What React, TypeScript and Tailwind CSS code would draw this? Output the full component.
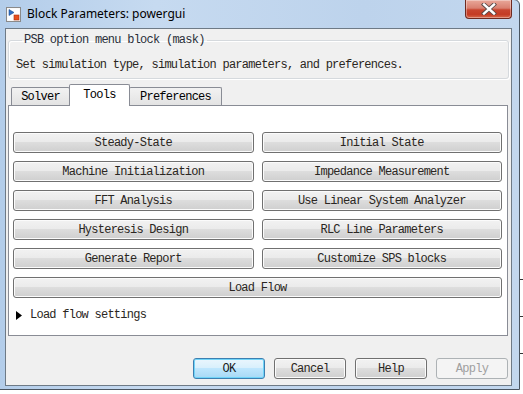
import React from "react";

const mono = "font-['Liberation_Mono','DejaVu_Sans_Mono',monospace] text-[12px] tracking-[-0.75px]";

function Btn({ label, wide }: { label: string; wide?: boolean }) {
  return (
    <div
      className={`h-[21px] rounded-[3px] border border-[#707070] bg-[linear-gradient(#f2f2f2_0%,#ebebeb_45%,#dddddd_50%,#cfcfcf_100%)] shadow-[inset_0_0_0_1px_#fbfbfb] flex items-center justify-center text-[#2a2622] ${mono} ${wide ? "col-span-2" : ""}`}
    >
      {label}
    </div>
  );
}

function BottomBtn({ label, kind }: { label: string; kind?: "ok" | "disabled" }) {
  let cls =
    "border-[#707070] bg-[linear-gradient(#f2f2f2_0%,#ebebeb_45%,#dddddd_50%,#cfcfcf_100%)] text-[#2a2622] shadow-[inset_0_0_0_1px_#fbfbfb]";
  if (kind === "ok")
    cls =
      "border-[#3c7fb1] bg-[linear-gradient(#eaf6fd_0%,#d9f0fc_45%,#bee6fd_50%,#a7d9f5_100%)] text-[#1a1a1a] shadow-[inset_0_0_0_1px_#70d4f8]";
  if (kind === "disabled")
    cls = "border-[#adb2b5] bg-[#f4f4f4] text-[#a0a0a0]";
  return (
    <div className={`w-[72px] h-[21px] rounded-[3px] border flex items-center justify-center ${mono} ${cls}`}>
      {label}
    </div>
  );
}

function AppIcon() {
  return (
    <svg width="15" height="15" viewBox="0 0 15 15">
      <rect x="0.5" y="0.5" width="14" height="14" fill="#f4f4f4" stroke="#8a8a8a" />
      <rect x="1.5" y="1.5" width="12" height="12" fill="#ffffff" />
      <path d="M3 2.5 L8 5.5 L3 8.5 Z" fill="#2f6fc4" stroke="#1c4f94" strokeWidth="0.6" />
      <rect x="8" y="8" width="5" height="5" fill="#e8501f" stroke="#a8300c" strokeWidth="0.6" />
    </svg>
  );
}

function CloseBtn() {
  return (
    <div className="w-[47px] h-[19px] rounded-b-[4px] border border-t-0 border-[#6e2a20] bg-[linear-gradient(#e9a89a_0%,#d98070_45%,#c8452f_55%,#c43b24_80%,#d8684a_100%)] shadow-[inset_0_0_0_1px_rgba(255,255,255,0.35)] flex items-center justify-center">
      <svg width="16" height="12" viewBox="0 0 16 12">
        <path d="M3 1.5 L13 10.5 M13 1.5 L3 10.5" stroke="#5a4a48" strokeWidth="4.2" strokeLinecap="square" />
        <path d="M3 1.5 L13 10.5 M13 1.5 L3 10.5" stroke="#ffffff" strokeWidth="2.4" strokeLinecap="square" />
      </svg>
    </div>
  );
}

export default function App() {
  const rows: [string, string][] = [
    ["Steady-State", "Initial State"],
    ["Machine Initialization", "Impedance Measurement"],
    ["FFT Analysis", "Use Linear System Analyzer"],
    ["Hysteresis Design", "RLC Line Parameters"],
    ["Generate Report", "Customize SPS blocks"],
  ];
  return (
    <div className="w-[523px] h-[394px] bg-white overflow-hidden relative">
      {/* background desktop bits */}
      <div className="absolute left-[519px] top-[279px] w-[4px] h-px bg-[#333]" />
      <div className="absolute left-[519px] top-[316px] w-[4px] h-px bg-[#333]" />
      <div className="absolute left-[519px] top-[353px] w-[4px] h-px bg-[#333]" />

      {/* window */}
      <div className="absolute left-[-1px] top-[-1px] w-[521px] h-[391px] rounded-tr-[6px] border border-[#4a5561] bg-[linear-gradient(90deg,#b3cdea_0%,#c6daf0_30%,#bdd3ec_70%,#c2d7ee_100%)] flex flex-col">
        {/* title bar */}
        <div className="h-[28px] flex items-start pl-[6px] pr-[7px]">
          <div className="mt-[7px]">
            <AppIcon />
          </div>
          <div className="ml-[6px] mt-[5px] font-['Noto_Sans','Open_Sans',sans-serif] text-[12px] text-black leading-[18px]">
            Block Parameters: powergui
          </div>
          <div className="ml-auto">
            <CloseBtn />
          </div>
        </div>

        {/* content */}
        <div className="ml-[5px] w-[507px] h-[358px] border border-[#6e7a86] bg-[#f0f0f0] flex flex-col">
          {/* group box */}
          <fieldset className="mx-[2px] mt-[4px] h-[46px] border border-[#d5d9dd] rounded-[3px] shadow-[inset_1px_1px_0_#ffffff,1px_1px_0_#ffffff] px-[7px]">
            <legend className={`ml-[6px] px-[2px] text-[#2a2f3a] leading-[14px] ${mono}`}>
              PSB option menu block (mask)
            </legend>
            <div className={`mt-[11px] text-[#2a2622] leading-[14px] ${mono}`}>
              Set simulation type, simulation parameters, and preferences.
            </div>
          </fieldset>

          {/* tabs */}
          <div className="ml-[2px] mt-[5px] w-[500px] flex flex-col">
            <div className="h-[21px] flex items-end pl-[3px] relative z-10">
              <div className={`w-[59px] h-[18px] border border-b-0 border-[#898c95] rounded-t-[2px] bg-[linear-gradient(#f2f2f2,#e3e3e3)] flex items-center justify-center text-black ${mono}`}>
                Solver
              </div>
              <div className={`w-[61px] h-[22px] -ml-px border border-b-0 border-[#898c95] rounded-t-[2px] bg-white flex items-start pt-[1px] justify-center text-black translate-y-[1px] ${mono}`}>
                Tools
              </div>
              <div className={`w-[93px] h-[18px] -ml-px border border-b-0 border-[#898c95] rounded-t-[2px] bg-[linear-gradient(#f2f2f2,#e3e3e3)] flex items-center justify-center text-black ${mono}`}>
                Preferences
              </div>
            </div>
            <div className="h-[231px] border border-[#898c95] bg-white pt-[26px] pl-[4px] pr-[5px]">
              <div className="grid grid-cols-2 gap-x-[8px] gap-y-[8px]">
                {rows.map(([a, b]) => (
                  <React.Fragment key={a}>
                    <Btn label={a} />
                    <Btn label={b} />
                  </React.Fragment>
                ))}
                <Btn label="Load Flow" wide />
              </div>
              <div className={`mt-[8px] flex items-center text-[#2a2622] ${mono}`}>
                <svg width="6" height="9" viewBox="0 0 6 9" className="ml-[3px]">
                  <path d="M0 0 L6 4.5 L0 9 Z" fill="#000" />
                </svg>
                <span className="ml-[8px]">Load flow settings</span>
              </div>
            </div>
          </div>

          {/* bottom buttons */}
          <div className="mt-[22px] flex justify-end gap-[9px] pr-[3px]">
            <BottomBtn label="OK" kind="ok" />
            <BottomBtn label="Cancel" />
            <BottomBtn label="Help" />
            <BottomBtn label="Apply" kind="disabled" />
          </div>
        </div>
      </div>
    </div>
  );
}
